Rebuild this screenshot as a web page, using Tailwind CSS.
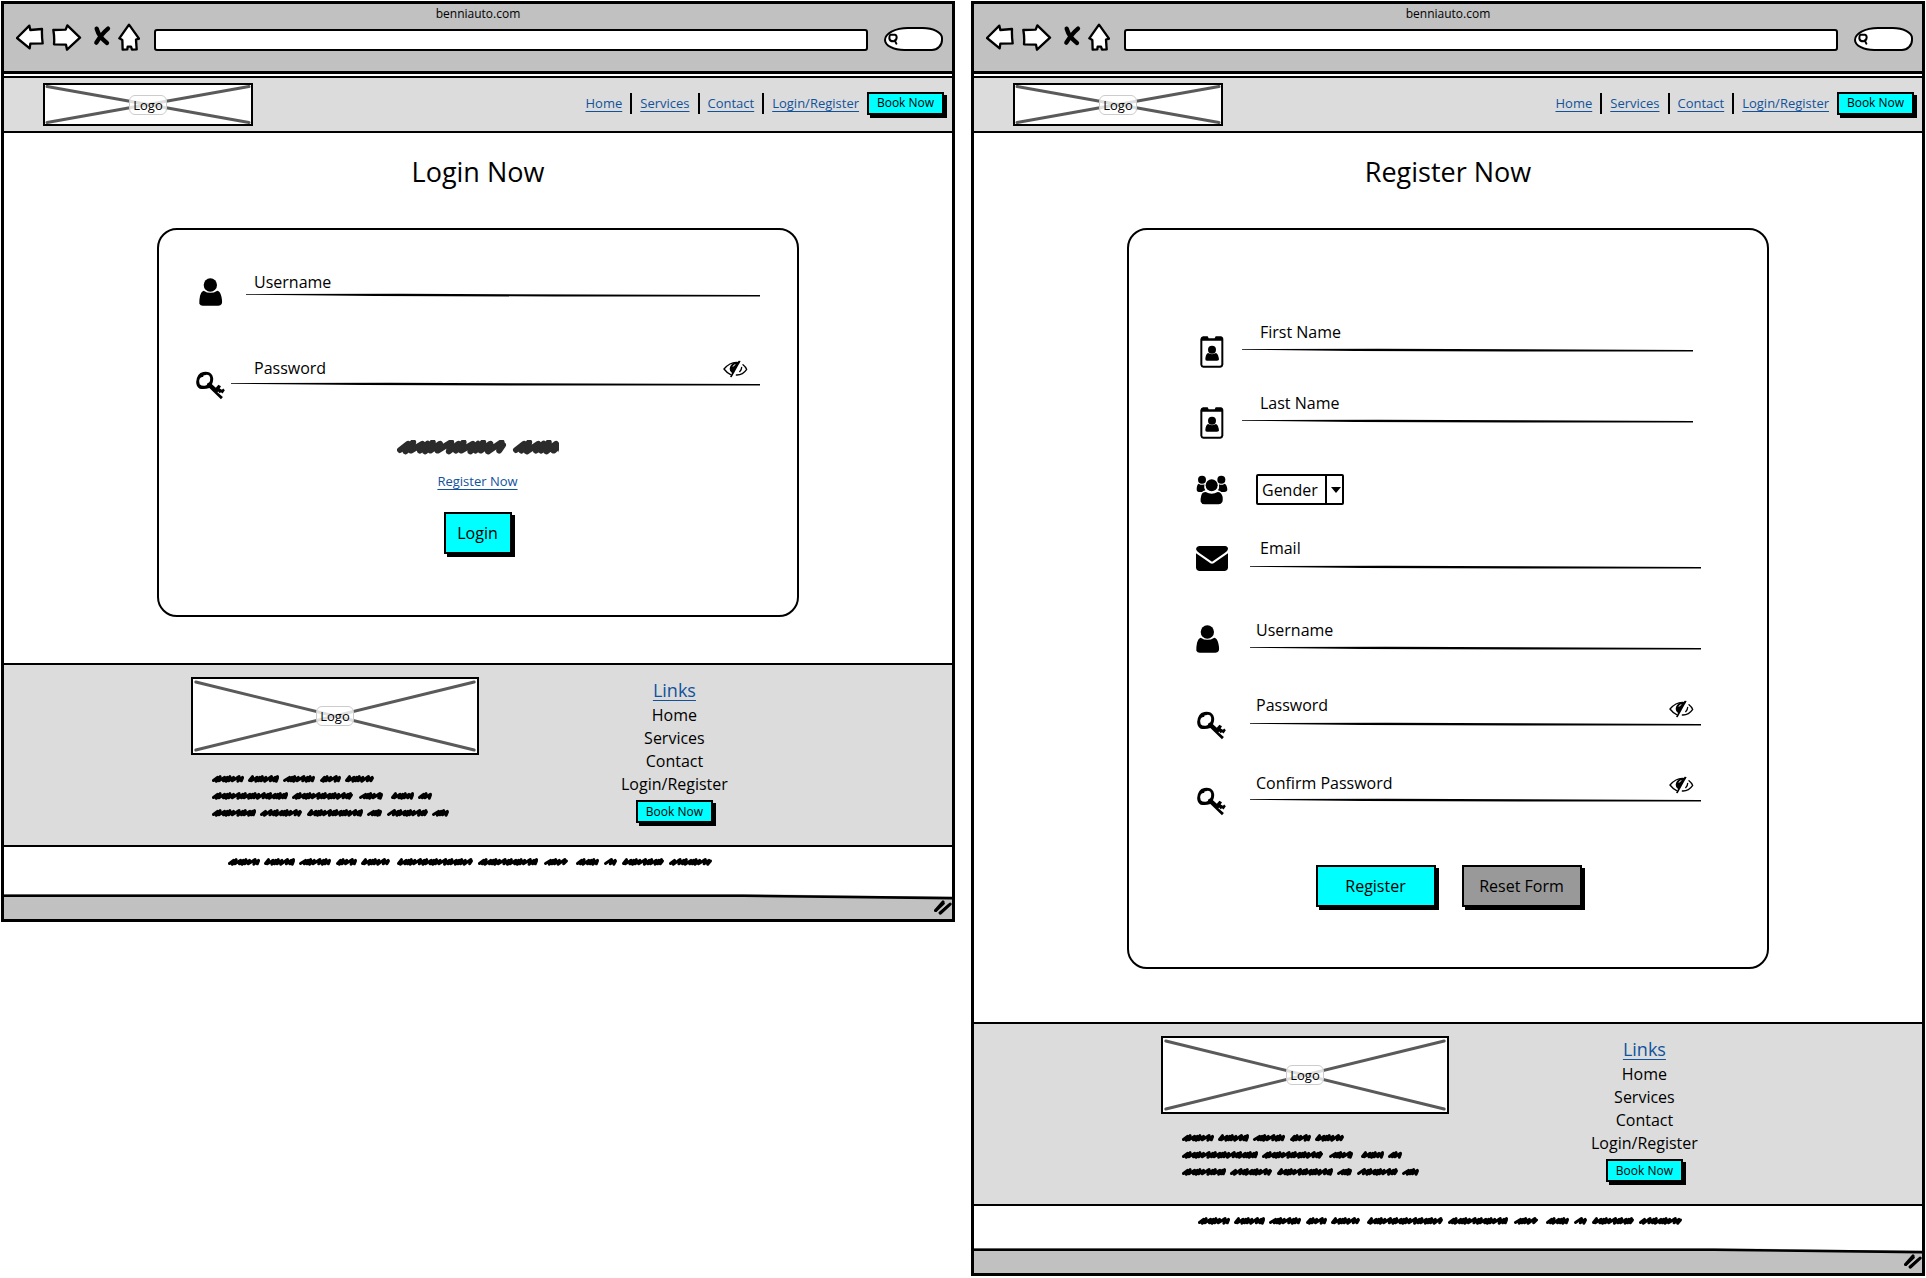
<!DOCTYPE html>
<html lang="en">
<head>
<meta charset="utf-8">
<meta name="viewport" content="width=device-width, initial-scale=1">
<title>benniauto.com wireframes</title>
<script src="https://cdn.jsdelivr.net/npm/@tailwindcss/browser@4"></script>
</head>
<body class="bg-white font-['Open_Sans',sans-serif] font-medium text-black">

<!-- Shared drawings -->
<svg class="hidden" aria-hidden="true">
  <symbol id="back" viewBox="48 68 84 84"><path d="M51 113 88 76 91 89 126 86Q125 106 128 129L91 130 89 144Z" fill="#fff" stroke="#000" stroke-width="7" stroke-linejoin="round"/></symbol>
  <symbol id="forward" viewBox="158 68 90 84"><path d="M162 89 199 88 204 75 242 112 203 148 200 133 164 132Q166 112 162 89Z" fill="#fff" stroke="#000" stroke-width="7" stroke-linejoin="round"/></symbol>
  <symbol id="stop" viewBox="269 68 72 84"><path d="M289 85Q296 110 320 128M323 85Q305 100 288 127" fill="none" stroke="#000" stroke-width="13" stroke-linecap="round"/></symbol>
  <symbol id="house" viewBox="357 68 66 84"><path d="M390 73 420 115 411 118 413 147 399 148 396 139H386L385 147 371 148 370 119 361 114Z" fill="#fff" stroke="#000" stroke-width="7" stroke-linejoin="round"/></symbol>
  <symbol id="magnifier" viewBox="0 0 30 36"><path d="M7 5H21Q26 6 26 14 25 24 16 25 5 25 4 16 4 8 7 5ZM20 22 25 32" fill="none" stroke="#000" stroke-width="6" stroke-linecap="round"/></symbol>
  <symbol id="cross" viewBox="0 0 100 100" preserveAspectRatio="none"><path d="M1 4 99 96M1 96 99 4" stroke="#5a5a5a" stroke-width="3" stroke-linecap="round" vector-effect="non-scaling-stroke"/></symbol>
  <symbol id="rule" viewBox="0 0 100 4" preserveAspectRatio="none"><path d="M0 .9 30 .8 100 2V3.4L60 3.5 25 3 0 1.7Z"/></symbol>
  <symbol id="person" viewBox="148 173 72 84"><circle cx="182" cy="194" r="20"/><path d="M162 211Q182 224 203 211 211 212 215 228 219 246 216 251 213 256 206 256H159Q152 256 149 250 148 242 151 227 154 214 162 211Z"/></symbol>
  <symbol id="key" viewBox="134 453 93 90"><path fill-rule="evenodd" d="M158 456Q178 453 186 466 192 480 185 494L197 505 205 496 213 500 209 507 216 511 220 507 225 513 218 523 213 519 209 522 204 517 202 519 219 534 213 541 177 506Q162 511 147 508 136 501 136 487 138 460 158 456ZM163 466Q156 465 158 472 151 470 147 477 143 484 147 494 152 500 163 499 171 498 171 491 177 490 179 484 182 476 177 468 171 463 163 466Z"/></symbol>
  <symbol id="badge" viewBox="237 346 72 96"><path fill-rule="evenodd" d="M246 347H260L263 353H281L284 347H299Q307 348 307 356V432Q306 440 298 441H247Q239 440 238 432V356Q239 348 246 347ZM244 360V432Q244 435 248 435H297Q301 435 301 431V360Z"/><circle cx="273" cy="387" r="12"/><path d="M261 397Q273 404 285 397 292 400 294 416 294 420 288 420H258Q252 420 253 414 254 401 261 397Z"/></symbol>
  <symbol id="people" viewBox="229 767 96 90"><circle cx="247" cy="781" r="12"/><circle cx="305" cy="781" r="12"/><circle cx="276" cy="798" r="18"/><path d="M237 793Q246 799 254 795 252 807 257 813 250 815 247 818H238Q231 818 231 810 231 797 237 793ZM315 793Q306 799 298 795 300 807 295 813 302 815 305 818H314Q323 818 323 810 322 797 315 793ZM258 818Q276 828 294 818 305 818 309 833 310 844 308 848 304 855 297 855H255Q246 855 243 847 242 839 245 828 248 818 258 818Z"/></symbol>
  <symbol id="mail" viewBox="228 978 96 78"><path d="M237 981H315Q324 982 324 990 323 997 314 1002L276 1028 238 1002Q229 996 228 990 229 982 237 981ZM228 1003 266 1029Q276 1039 286 1029L324 1003V1047Q323 1055 315 1056H237Q229 1055 228 1047Z"/></symbol>
  <symbol id="eye" viewBox="1031 61 75 54"><path d="M1079 69Q1055 64 1034 88 1044 101 1054 105M1091 75Q1100 82 1102 89 1090 107 1071 106M1087 83Q1087 91 1081 96" fill="none" stroke="#000" stroke-width="4" stroke-linecap="round"/><path d="M1066 68Q1052 75 1051 87 1051 96 1058 100L1052 112 1057 113 1084 64 1078 63 1075 68Z"/><path d="M1061 81Q1062 76 1068 75" fill="none" stroke="#fff" stroke-width="3"/></symbol>
  <symbol id="grip" viewBox="0 0 48 40"><path d="M4 28 24 5M17 35 43 11" stroke="#000" stroke-width="8" stroke-linecap="round"/><path d="M5 29 26 9M15 34 38 15" stroke="#000" stroke-width="6" stroke-linecap="round"/></symbol>
  <symbol id="sill" viewBox="0 0 100 6" preserveAspectRatio="none"><path d="M0 0H78L100 3.5V6H0Z" fill="#c1c1c1"/><path d="M78 0H100V3Z" fill="#fff"/><path d="M0 .5H78L100 2.8V5.5L78 3H0Z"/></symbol>
</svg>

<div class="flex items-start gap-4 px-px pt-px">

  <!-- Login window -->
  <section class="min-w-0 flex-1 border-[3px] border-black">
    <header class="border-b-[3px] border-black bg-[#c1c1c1] pb-5">
      <p class="text-center text-xs leading-[19px]">benniauto.com</p>
      <div class="flex h-7 items-end gap-2 pr-[9px] pl-3">
        <button type="button" aria-label="Back"><svg class="h-7 w-7"><use href="#back"/></svg></button>
        <button type="button" aria-label="Forward"><svg class="h-7 w-[30px]"><use href="#forward"/></svg></button>
        <button type="button" aria-label="Stop"><svg class="h-7 w-6"><use href="#stop"/></svg></button>
        <button type="button" aria-label="Home" class="-ml-1"><svg class="h-7 w-[22px]"><use href="#house"/></svg></button>
        <input type="text" aria-label="Address" class="ml-1.5 h-[22px] min-w-0 flex-1 rounded-[3px] border-2 border-black bg-white px-2 text-xs outline-none">
        <label class="ml-2 flex h-6 w-[59px] items-center rounded-[26px_22px_12px_22px/14px_12px_12px_12px] border-2 border-black bg-white pl-0.5">
          <svg class="h-3 w-[10px] shrink-0"><use href="#magnifier"/></svg>
          <input type="search" aria-label="Search" class="w-9 bg-transparent text-xs outline-none">
        </label>
      </div>
    </header>
    <nav class="mt-0.5 flex h-[57px] items-center justify-between border-y-2 border-black bg-[#dcdcdc] pr-2 pl-[39px]">
      <div class="relative flex h-[43px] w-[210px] items-center justify-center border-2 border-black bg-white">
        <svg class="absolute inset-0 h-full w-full"><use href="#cross"/></svg>
        <span class="relative rounded-md border border-[#ccc] bg-white/80 px-[3px] text-[13px] leading-[18px]">Logo</span>
      </div>
      <div class="flex items-center gap-2 pb-[3px] text-[13px] leading-5">
        <a href="#" class="text-[#11529b] underline decoration-1 underline-offset-3">Home</a>
        <span class="h-[21px] w-0.5 bg-black"></span>
        <a href="#" class="text-[#11529b] underline decoration-1 underline-offset-3">Services</a>
        <span class="h-[21px] w-0.5 bg-black"></span>
        <a href="#" class="text-[#11529b] underline decoration-1 underline-offset-3">Contact</a>
        <span class="h-[21px] w-0.5 bg-black"></span>
        <a href="#" class="text-[#11529b] underline decoration-1 underline-offset-3">Login/Register</a>
        <button type="button" class="h-[23px] w-[77px] border-2 border-black bg-[#00ffff] text-xs shadow-[3px_3px_0_#000]">Book Now</button>
      </div>
    </nav>

    <main class="pt-[19px] pb-[46px]">
      <h1 class="text-center text-[27px] leading-10">Login Now</h1>
      <form class="mx-auto mt-9 flex max-w-[642px] flex-col items-center rounded-[20px] border-2 border-black pt-10 pr-[37px] pb-[61px] pl-9">
        <div class="flex w-full items-start">
          <span class="flex w-8 justify-center pt-2"><svg class="h-7 w-6"><use href="#person"/></svg></span>
          <div class="ml-[19px] grid h-[27px] flex-1 leading-6">
            <input id="l-user" type="text" placeholder=" " class="peer col-start-1 row-start-1 h-6 bg-transparent pl-2 outline-none">
            <label for="l-user" class="pointer-events-none col-start-1 row-start-1 h-6 pl-2 peer-[:not(:placeholder-shown)]:invisible">Username</label>
            <svg class="col-start-1 row-start-1 h-1 w-full self-end"><use href="#rule"/></svg>
          </div>
        </div>
        <div class="mt-[50px] flex w-full items-start">
          <span class="flex w-8 pt-[15px]"><svg class="h-[29px] w-[31px]"><use href="#key"/></svg></span>
          <div class="ml-1 grid h-[30px] flex-1 leading-6">
            <input id="l-pass" type="password" placeholder=" " class="peer col-start-1 row-start-1 h-6 bg-transparent pl-[23px] outline-none">
            <label for="l-pass" class="pointer-events-none col-start-1 row-start-1 h-6 pl-[23px] peer-[:not(:placeholder-shown)]:invisible">Password</label>
            <button type="button" aria-label="Show password" class="col-start-1 row-start-1 mr-3 self-start justify-self-end pt-1"><svg class="h-[18px] w-[25px]"><use href="#eye"/></svg></button>
            <svg class="col-start-1 row-start-1 h-1 w-full self-end"><use href="#rule"/></svg>
          </div>
        </div>
        <svg class="mt-10 h-4 w-[162px]" data-scribble="0-109,116-170" data-big></svg>
        <a href="#" class="mt-[15px] text-[13px] leading-5 text-[#11529b] underline decoration-1 underline-offset-3">Register Now</a>
        <button type="submit" class="mt-[21px] h-[42px] w-[68px] border-2 border-black bg-[#00ffff] shadow-[3px_3px_0_#000]">Login</button>
      </form>
    </main>

    <footer>
      <div class="flex items-start gap-[142px] border-y-2 border-black bg-[#dcdcdc] pt-3 pb-[22px] pl-[187px]">
        <div>
          <div class="relative flex h-[78px] w-72 items-center justify-center border-2 border-black bg-white">
            <svg class="absolute inset-0 h-full w-full"><use href="#cross"/></svg>
            <span class="relative rounded-md border border-[#ccc] bg-white/80 px-[3px] text-[13px] leading-[18px]">Logo</span>
          </div>
          <div class="mt-4 flex flex-col pl-[21px]">
            <svg class="h-[17px] w-60" data-scribble="0-32,36-67,71-103,108-129,133-162"></svg>
            <svg class="h-[17px] w-60" data-scribble="0-76,80-141,147-171,179-202,206-220"></svg>
            <svg class="h-[17px] w-60" data-scribble="0-44,48-90,95-151,155-170,175-216,220-237"></svg>
          </div>
        </div>
        <ul class="flex flex-col items-center leading-[23px]">
          <li class="mb-px text-lg leading-[26px]"><a href="#" class="text-[#11529b] underline decoration-1 underline-offset-3">Links</a></li>
          <li><a href="#">Home</a></li>
          <li><a href="#">Services</a></li>
          <li><a href="#">Contact</a></li>
          <li><a href="#">Login/Register</a></li>
          <li class="mt-1 flex"><button type="button" class="h-[23px] w-[77px] border-2 border-black bg-[#00ffff] text-xs shadow-[3px_3px_0_#000]">Book Now</button></li>
        </ul>
      </div>
      <div class="flex justify-center pt-[7px] pb-[23px]">
        <svg class="h-[17px] w-[500px]" data-scribble="0-32,36-67,71-103,108-129,133-162,169-245,250-310,316-340,348-371,376-389,394-436,441-484"></svg>
      </div>
      <div class="bg-[#c1c1c1] pb-1">
        <svg class="block h-[6px] w-full"><use href="#sill"/></svg>
        <svg class="ml-auto block h-[15px] w-[18px]"><use href="#grip"/></svg>
      </div>
    </footer>
  </section>

  <!-- Register window -->
  <section class="min-w-0 flex-1 border-[3px] border-black">
    <header class="border-b-[3px] border-black bg-[#c1c1c1] pb-5">
      <p class="text-center text-xs leading-[19px]">benniauto.com</p>
      <div class="flex h-7 items-end gap-2 pr-[9px] pl-3">
        <button type="button" aria-label="Back"><svg class="h-7 w-7"><use href="#back"/></svg></button>
        <button type="button" aria-label="Forward"><svg class="h-7 w-[30px]"><use href="#forward"/></svg></button>
        <button type="button" aria-label="Stop"><svg class="h-7 w-6"><use href="#stop"/></svg></button>
        <button type="button" aria-label="Home" class="-ml-1"><svg class="h-7 w-[22px]"><use href="#house"/></svg></button>
        <input type="text" aria-label="Address" class="ml-1.5 h-[22px] min-w-0 flex-1 rounded-[3px] border-2 border-black bg-white px-2 text-xs outline-none">
        <label class="ml-2 flex h-6 w-[59px] items-center rounded-[26px_22px_12px_22px/14px_12px_12px_12px] border-2 border-black bg-white pl-0.5">
          <svg class="h-3 w-[10px] shrink-0"><use href="#magnifier"/></svg>
          <input type="search" aria-label="Search" class="w-9 bg-transparent text-xs outline-none">
        </label>
      </div>
    </header>
    <nav class="mt-0.5 flex h-[57px] items-center justify-between border-y-2 border-black bg-[#dcdcdc] pr-2 pl-[39px]">
      <div class="relative flex h-[43px] w-[210px] items-center justify-center border-2 border-black bg-white">
        <svg class="absolute inset-0 h-full w-full"><use href="#cross"/></svg>
        <span class="relative rounded-md border border-[#ccc] bg-white/80 px-[3px] text-[13px] leading-[18px]">Logo</span>
      </div>
      <div class="flex items-center gap-2 pb-[3px] text-[13px] leading-5">
        <a href="#" class="text-[#11529b] underline decoration-1 underline-offset-3">Home</a>
        <span class="h-[21px] w-0.5 bg-black"></span>
        <a href="#" class="text-[#11529b] underline decoration-1 underline-offset-3">Services</a>
        <span class="h-[21px] w-0.5 bg-black"></span>
        <a href="#" class="text-[#11529b] underline decoration-1 underline-offset-3">Contact</a>
        <span class="h-[21px] w-0.5 bg-black"></span>
        <a href="#" class="text-[#11529b] underline decoration-1 underline-offset-3">Login/Register</a>
        <button type="button" class="h-[23px] w-[77px] border-2 border-black bg-[#00ffff] text-xs shadow-[3px_3px_0_#000]">Book Now</button>
      </div>
    </nav>

    <main class="pt-[19px] pb-[53px]">
      <h1 class="text-center text-[27px] leading-10">Register Now</h1>
      <form class="mx-auto mt-9 max-w-[642px] rounded-[20px] border-2 border-black pt-[90px] pr-[66px] pb-[60px] pl-[67px]">
        <div class="flex h-12 items-start pr-2">
          <span class="flex w-8 justify-center pt-4"><svg class="h-8 w-6"><use href="#badge"/></svg></span>
          <div class="ml-[14px] grid h-8 flex-1 leading-6">
            <input id="r-first" type="text" placeholder=" " class="peer col-start-1 row-start-1 h-6 bg-transparent pl-[18px] outline-none">
            <label for="r-first" class="pointer-events-none col-start-1 row-start-1 h-6 pl-[18px] peer-[:not(:placeholder-shown)]:invisible">First Name</label>
            <svg class="col-start-1 row-start-1 h-1 w-full self-end"><use href="#rule"/></svg>
          </div>
        </div>
        <div class="mt-[23px] flex h-12 items-start pr-2">
          <span class="flex w-8 justify-center pt-4"><svg class="h-8 w-6"><use href="#badge"/></svg></span>
          <div class="ml-[14px] grid h-8 flex-1 leading-6">
            <input id="r-last" type="text" placeholder=" " class="peer col-start-1 row-start-1 h-6 bg-transparent pl-[18px] outline-none">
            <label for="r-last" class="pointer-events-none col-start-1 row-start-1 h-6 pl-[18px] peer-[:not(:placeholder-shown)]:invisible">Last Name</label>
            <svg class="col-start-1 row-start-1 h-1 w-full self-end"><use href="#rule"/></svg>
          </div>
        </div>
        <div class="mt-[35px] flex h-[31px] items-center">
          <span class="flex w-8 justify-center"><svg class="h-[30px] w-8"><use href="#people"/></svg></span>
          <div class="ml-7 grid">
            <select aria-label="Gender" class="col-start-1 row-start-1 h-[31px] w-[88px] appearance-none rounded-[2px] border-2 border-black bg-white pl-1 outline-none">
              <option>Gender</option><option>Female</option><option>Male</option><option>Other</option>
            </select>
            <span class="pointer-events-none col-start-1 row-start-1 flex w-[19px] items-center justify-center self-stretch justify-self-end border-l-2 border-black"><svg class="h-[6px] w-[10px]" viewBox="0 0 10 6"><path d="M0 0H10L5 6Z"/></svg></span>
          </div>
        </div>
        <div class="mt-[31px] flex h-[34px] items-start">
          <span class="flex w-8 justify-center pt-[9px]"><svg class="h-[26px] w-8"><use href="#mail"/></svg></span>
          <div class="ml-[22px] grid h-[33px] flex-1 leading-6">
            <input id="r-email" type="email" placeholder=" " class="peer col-start-1 row-start-1 h-6 bg-transparent pl-[10px] outline-none">
            <label for="r-email" class="pointer-events-none col-start-1 row-start-1 h-6 pl-[10px] peer-[:not(:placeholder-shown)]:invisible">Email</label>
            <svg class="col-start-1 row-start-1 h-1 w-full self-end"><use href="#rule"/></svg>
          </div>
        </div>
        <div class="mt-12 flex h-9 items-start">
          <span class="flex w-8 pt-[7px]"><svg class="h-7 w-6"><use href="#person"/></svg></span>
          <div class="ml-[22px] grid h-8 flex-1 leading-6">
            <input id="r-user" type="text" placeholder=" " class="peer col-start-1 row-start-1 h-6 bg-transparent pl-[6px] outline-none">
            <label for="r-user" class="pointer-events-none col-start-1 row-start-1 h-6 pl-[6px] peer-[:not(:placeholder-shown)]:invisible">Username</label>
            <svg class="col-start-1 row-start-1 h-1 w-full self-end"><use href="#rule"/></svg>
          </div>
        </div>
        <div class="mt-[39px] flex h-[46px] items-start">
          <span class="flex w-8 pt-[18px]"><svg class="h-[29px] w-[31px]"><use href="#key"/></svg></span>
          <div class="ml-[22px] grid h-[33px] flex-1 leading-6">
            <input id="r-pass" type="password" placeholder=" " class="peer col-start-1 row-start-1 h-6 bg-transparent pl-[6px] outline-none">
            <label for="r-pass" class="pointer-events-none col-start-1 row-start-1 h-6 pl-[6px] peer-[:not(:placeholder-shown)]:invisible">Password</label>
            <button type="button" aria-label="Show password" class="col-start-1 row-start-1 mr-[7px] self-start justify-self-end pt-[7px]"><svg class="h-[18px] w-[25px]"><use href="#eye"/></svg></button>
            <svg class="col-start-1 row-start-1 h-1 w-full self-end"><use href="#rule"/></svg>
          </div>
        </div>
        <div class="mt-[32px] flex h-[46px] items-start">
          <span class="flex w-8 pt-4"><svg class="h-[29px] w-[31px]"><use href="#key"/></svg></span>
          <div class="ml-[22px] grid h-[31px] flex-1 leading-6">
            <input id="r-confirm" type="password" placeholder=" " class="peer col-start-1 row-start-1 h-6 bg-transparent pl-[6px] outline-none">
            <label for="r-confirm" class="pointer-events-none col-start-1 row-start-1 h-6 pl-[6px] peer-[:not(:placeholder-shown)]:invisible">Confirm Password</label>
            <button type="button" aria-label="Show password confirmation" class="col-start-1 row-start-1 mr-[7px] self-start justify-self-end pt-[5px]"><svg class="h-[18px] w-[25px]"><use href="#eye"/></svg></button>
            <svg class="col-start-1 row-start-1 h-1 w-full self-end"><use href="#rule"/></svg>
          </div>
        </div>
        <div class="mt-12 flex justify-center gap-[26px]">
          <button type="submit" class="h-[42px] w-[120px] border-2 border-black bg-[#00ffff] shadow-[3px_3px_0_#000]">Register</button>
          <button type="reset" class="h-[42px] w-[120px] border-2 border-black bg-[#999] shadow-[3px_3px_0_#000]">Reset Form</button>
        </div>
      </form>
    </main>

    <footer>
      <div class="flex items-start gap-[142px] border-y-2 border-black bg-[#dcdcdc] pt-3 pb-[22px] pl-[187px]">
        <div>
          <div class="relative flex h-[78px] w-72 items-center justify-center border-2 border-black bg-white">
            <svg class="absolute inset-0 h-full w-full"><use href="#cross"/></svg>
            <span class="relative rounded-md border border-[#ccc] bg-white/80 px-[3px] text-[13px] leading-[18px]">Logo</span>
          </div>
          <div class="mt-4 flex flex-col pl-[21px]">
            <svg class="h-[17px] w-60" data-scribble="0-32,36-67,71-103,108-129,133-162"></svg>
            <svg class="h-[17px] w-60" data-scribble="0-76,80-141,147-171,179-202,206-220"></svg>
            <svg class="h-[17px] w-60" data-scribble="0-44,48-90,95-151,155-170,175-216,220-237"></svg>
          </div>
        </div>
        <ul class="flex flex-col items-center leading-[23px]">
          <li class="mb-px text-lg leading-[26px]"><a href="#" class="text-[#11529b] underline decoration-1 underline-offset-3">Links</a></li>
          <li><a href="#">Home</a></li>
          <li><a href="#">Services</a></li>
          <li><a href="#">Contact</a></li>
          <li><a href="#">Login/Register</a></li>
          <li class="mt-1 flex"><button type="button" class="h-[23px] w-[77px] border-2 border-black bg-[#00ffff] text-xs shadow-[3px_3px_0_#000]">Book Now</button></li>
        </ul>
      </div>
      <div class="flex justify-center pt-[7px] pb-[18px]">
        <svg class="h-[17px] w-[500px]" data-scribble="0-32,36-67,71-103,108-129,133-162,169-245,250-310,316-340,348-371,376-389,394-436,441-484"></svg>
      </div>
      <div class="bg-[#c1c1c1] pb-1">
        <svg class="block h-[6px] w-full"><use href="#sill"/></svg>
        <svg class="ml-auto block h-[15px] w-[18px]"><use href="#grip"/></svg>
      </div>
    </footer>
  </section>
</div>

<script>
// Fills each data-scribble svg with one zigzag stroke per "start-end" word.
document.querySelectorAll('[data-scribble]').forEach(svg => {
  const big = svg.hasAttribute('data-big');
  const k = big ? 2 : 1, mid = big ? 7 : 8;
  const lift = [2, 3, 2, 2, 3, 2, 3], step = [4, 3, 5, 3, 3, 4, 6];
  let n = 0;
  for (const word of svg.dataset.scribble.split(',')) {
    const [from, to] = word.split('-').map(Number);
    const pad = 1.5 * k;
    let x = from + pad, d = `M${x} ${mid + 1.5 * k}`;
    while (x < to - pad - 2 * k) {
      const nx = Math.min(x + step[n % 7] * k, to - pad), up = lift[n % 7] * k * 0.8;
      d += `L${nx} ${mid - up}L${nx - 1.2 * k} ${mid + (n % 3 ? 1.8 : 2.2) * k}`;
      x = nx - 0.4 * k;
      n++;
    }
    d += `L${to - pad} ${mid - k}`;
    const p = document.createElementNS('http://www.w3.org/2000/svg', 'path');
    p.setAttribute('d', d);
    p.setAttribute('fill', 'none');
    p.setAttribute('stroke', big ? '#2b2b2b' : '#000');
    p.setAttribute('stroke-width', big ? 6 : 3);
    p.setAttribute('stroke-linecap', 'round');
    p.setAttribute('stroke-linejoin', 'round');
    svg.append(p);
  }
});
</script>
</body>
</html>
